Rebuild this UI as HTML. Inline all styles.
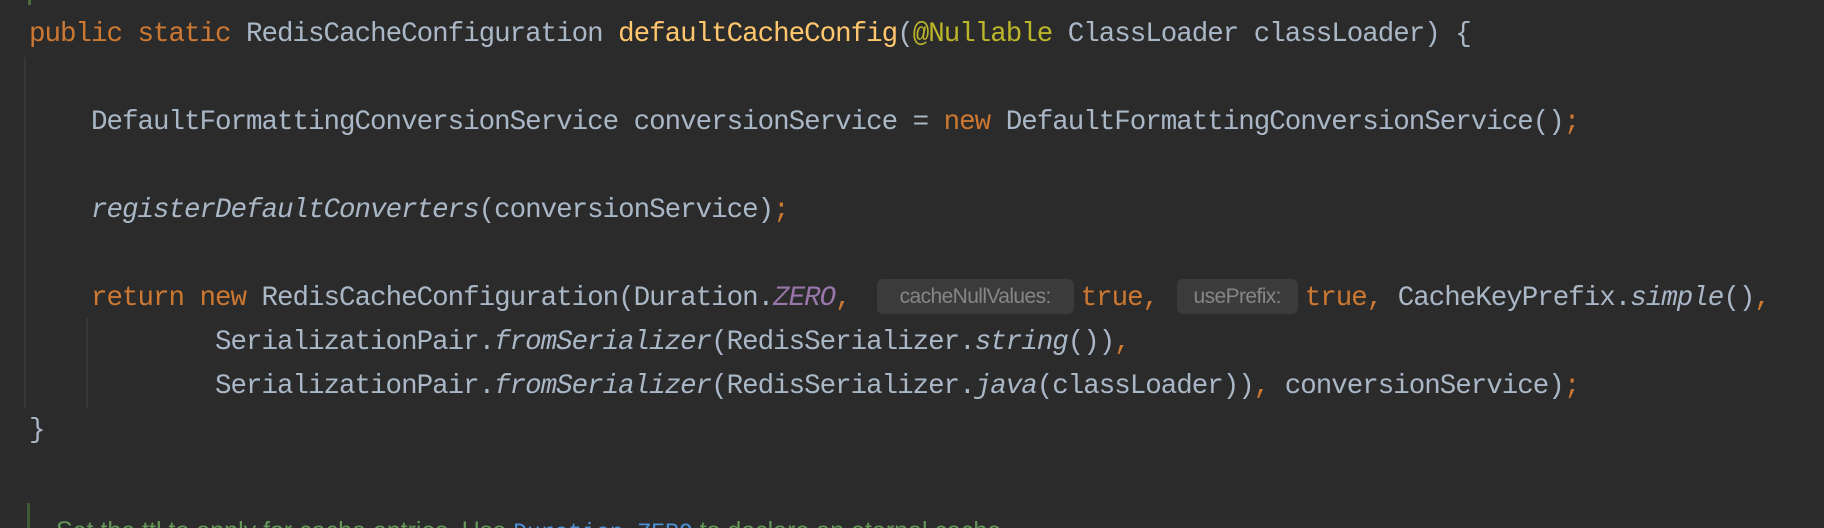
<!DOCTYPE html>
<html><head><meta charset="utf-8"><style>
html,body{margin:0;padding:0;background:#2b2b2b;width:1824px;height:528px;overflow:hidden;position:relative}
.l{position:absolute;left:29px;height:44px;line-height:44px;white-space:pre;font-family:"Liberation Mono",monospace;font-size:27.5px;letter-spacing:-1.0px;color:#a9b7c6}
.k{color:#cc7832}.m{color:#ffc66d}.a{color:#bbb529}.p{color:#9876aa;font-style:italic}.i{font-style:italic}
.h{display:inline-block;height:35px;line-height:35px;background:#3b3b3c;border-radius:6px;color:#868686;font-family:"Liberation Sans",sans-serif;font-size:21px;text-align:center;vertical-align:top;margin-top:2px;letter-spacing:-0.6px}
.g{position:absolute;width:2px;background:#373737}
</style></head><body>
<div style="position:absolute;left:28px;top:0;width:3px;height:5px;background:#4b6b3d"></div>
<div class="g" style="left:24px;top:57px;height:351px"></div>
<div class="g" style="left:86px;top:318px;height:90px"></div>
<div class="l" style="top:13px"><span class="k">public static </span>RedisCacheConfiguration <span class="m">defaultCacheConfig</span>(<span class="a">@Nullable</span> ClassLoader classLoader) {</div>
<div class="l" style="top:101px">    DefaultFormattingConversionService conversionService = <span class="k">new </span>DefaultFormattingConversionService()<span class="k">;</span></div>
<div class="l" style="top:189px">    <span class="i">registerDefaultConverters</span>(conversionService)<span class="k">;</span></div>
<div class="l" style="top:277px">    <span class="k">return new </span>RedisCacheConfiguration(Duration.<span class="p">ZERO</span><span class="k">,</span><span class="h" style="width:197px;margin-left:26px;margin-right:7px">cacheNullValues:</span><span class="k">true, </span><span class="h" style="width:121px;margin-left:3px;margin-right:7px">usePrefix:</span><span class="k">true, </span>CacheKeyPrefix.<span class="i">simple</span>()<span class="k">,</span></div>
<div class="l" style="top:321px">            SerializationPair.<span class="i">fromSerializer</span>(RedisSerializer.<span class="i">string</span>())<span class="k">,</span></div>
<div class="l" style="top:365px">            SerializationPair.<span class="i">fromSerializer</span>(RedisSerializer.<span class="i">java</span>(classLoader))<span class="k">, </span>conversionService)<span class="k">;</span></div>
<div class="l" style="top:409px">}</div>
<div style="position:absolute;left:27px;top:503px;width:3px;height:30px;background:#3f5a33"></div>
<div style="position:absolute;left:56px;top:516px;white-space:pre;font-family:'Liberation Sans',sans-serif;font-size:25px;line-height:30px;color:#629755">Set the ttl to apply for cache entries. Use <span style="font-family:'Liberation Mono',monospace;color:#4f8fd6;font-size:23px">Duration.ZERO</span> to declare an eternal cache.</div>
</body></html>
